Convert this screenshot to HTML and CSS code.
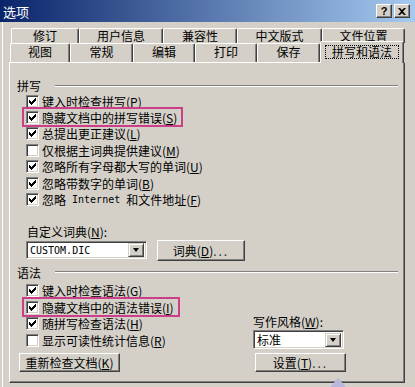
FILE: index.html
```html
<!DOCTYPE html>
<html lang="zh-CN">
<head>
  <meta charset="utf-8">
  <title>选项</title>
  <link rel="stylesheet" href="styles.css">
</head>
<body>

<div class="dialog">
  <div class="titlebar">
    <span class="title">选项</span>
    <div class="caption-btns">
      <span class="cap-btn">?</span>
      <span class="cap-btn">
        <svg width="8" height="7" viewBox="0 0 8 7"><path d="M0 0h2l2 2 2-2h2L5 3.5 8 7H6L4 5 2 7H0l3-3.5z" fill="#000"/></svg>
      </span>
    </div>
  </div>

  <div class="tabbox">
    <div class="tab-row back">
      <div class="tab">修订</div>
      <div class="tab">用户信息</div>
      <div class="tab">兼容性</div>
      <div class="tab">中文版式</div>
      <div class="tab">文件位置</div>
    </div>
    <div class="tab-row front">
      <div class="tab">视图</div>
      <div class="tab">常规</div>
      <div class="tab">编辑</div>
      <div class="tab">打印</div>
      <div class="tab">保存</div>
      <div class="tab selected"><span class="focus">拼写和语法</span></div>
    </div>

    <div class="panel">
      <!-- Spelling -->
      <div class="group-head"><span>拼写</span><i class="etch"></i></div>
      <div class="check"><span class="box on"></span>键入时检查拼写(<u>P</u>)</div>
      <div class="check marked"><span class="box on"></span>隐藏文档中的拼写错误(<u>S</u>)</div>
      <div class="check"><span class="box on"></span>总提出更正建议(<u>L</u>)</div>
      <div class="check"><span class="box"></span>仅根据主词典提供建议(<u>M</u>)</div>
      <div class="check"><span class="box on"></span>忽略所有字母都大写的单词(<u>U</u>)</div>
      <div class="check"><span class="box on"></span>忽略带数字的单词(<u>B</u>)</div>
      <div class="check"><span class="box on"></span>忽略<span class="mono"> Internet </span>和文件地址(<u>F</u>)</div>

      <div class="field-label">自定义词典(<u>N</u>):</div>
      <div class="dict-row">
        <div class="combo dict">
          <span class="combo-text mono">CUSTOM.DIC</span>
          <span class="drop"></span>
        </div>
        <div class="btn dict-btn">词典(<u>D</u>)<span class="dots">...</span></div>
      </div>

      <!-- Grammar -->
      <div class="group-head grammar-head"><span>语法</span><i class="etch"></i></div>
      <div class="grammar">
        <div class="grammar-left">
          <div class="check"><span class="box on"></span>键入时检查语法(<u>G</u>)</div>
          <div class="check marked"><span class="box on"></span>隐藏文档中的语法错误(<u>I</u>)</div>
          <div class="check"><span class="box on"></span>随拼写检查语法(<u>H</u>)</div>
          <div class="check"><span class="box"></span>显示可读性统计信息(<u>R</u>)</div>
          <div class="btn recheck">重新检查文档(<u>K</u>)</div>
        </div>
        <div class="grammar-right">
          <div class="field-label style-label">写作风格(<u>W</u>):</div>
          <div class="combo style">
            <span class="combo-text">标准</span>
            <span class="drop"></span>
          </div>
          <div class="btn settings">设置(<u>T</u>)<span class="dots">...</span></div>
        </div>
      </div>
    </div>
  </div>

  <span class="watermark"></span>
</div>

</body>
</html>
```

FILE: styles.css
```css
body {
  margin: 0;
  background: #d4d0c8;
  font-family: "Noto Sans CJK SC", sans-serif;
  font-size: 12px;
  color: #000;
  overflow: hidden;
}

u {
  text-underline-offset: 1px;
}

.mono {
  font-family: "DejaVu Sans Mono", monospace;
  font-size: 10px;
  white-space: pre;
}

.dialog {
  width: 415px;
  height: 387px;
  position: relative;
}

/* Title bar */
.titlebar {
  height: 22px;
  box-sizing: border-box;
  padding: 0 5px 0 3px;
  display: flex;
  align-items: center;
  justify-content: space-between;
  background: linear-gradient(to right, #0a246a, #a6caf0);
  color: #fff;
}

.title {
  font-size: 13px;
  line-height: 1;
}

.caption-btns {
  display: flex;
  gap: 2px;
}

.cap-btn {
  width: 16px;
  height: 14px;
  box-sizing: border-box;
  display: flex;
  align-items: center;
  justify-content: center;
  background: #d4d0c8;
  border: 1px solid;
  border-color: #fff #404040 #404040 #fff;
  box-shadow: inset -1px -1px #808080;
  color: #000;
  font: bold 11px "Liberation Sans", sans-serif;
}

/* Tabs */
.tabbox {
  height: 365px;
  padding: 6px 10px 0 9px;
  box-shadow: inset 2px 0 #d4d0c8, inset 3px 0 #fff;
}

.tab-row {
  display: flex;
}

.tab-row.back {
  height: 15px;
  padding-left: 2px;
}

.tab-row.front {
  height: 19px;
  padding-left: 1px;
  align-items: flex-end;
}

.tab {
  height: 100%;
  box-sizing: border-box;
  border-top: 1px solid #fff;
  border-left: 1px solid #fff;
  border-right: 1px solid #404040;
  border-radius: 2px 2px 0 0;
  box-shadow: inset -1px 0 #808080;
  text-align: center;
  line-height: 13px;
  background: #d4d0c8;
}

.back .tab:nth-child(1) { width: 68px; }
.back .tab:nth-child(2) { width: 84px; }
.back .tab:nth-child(3) { width: 74px; }
.back .tab:nth-child(4) { width: 85px; }
.back .tab:nth-child(5) { width: 83px; }

.front .tab { line-height: 16px; }
.front .tab:nth-child(1) { width: 60px; }
.front .tab:nth-child(2) { width: 63px; }
.front .tab:nth-child(3) { width: 62px; }
.front .tab:nth-child(4) { width: 62px; }
.front .tab:nth-child(5) { width: 63px; }

.tab.selected {
  width: 84px;
  height: 22px;
  margin-bottom: -1px;
  position: relative;
  z-index: 1;
  line-height: 12px;
}

.focus {
  display: inline-block;
  margin-top: 3px;
  padding: 0 6px;
  border: 1px dotted #000;
}

/* Page panel */
.panel {
  height: 321px;
  box-sizing: border-box;
  padding: 15px 6px 0 0;
  border: 1px solid;
  border-color: #fff #404040 #404040 #fff;
  box-shadow: inset -1px -1px #808080;
}

.group-head {
  height: 15px;
  padding-left: 7px;
  display: flex;
  align-items: center;
}

.etch {
  flex: 1;
  margin-left: 14px;
  border-top: 1px solid #808080;
  border-bottom: 1px solid #fff;
}

.grammar-head {
  margin-top: 4px;
}

.check {
  width: fit-content;
  height: 16.4px;
  margin-left: 16px;
  display: flex;
  align-items: center;
  white-space: nowrap;
}

.check.marked {
  position: relative;
}

.check.marked::after {
  content: "";
  position: absolute;
  left: -4px;
  right: -6px;
  top: -2px;
  bottom: -1px;
  border: 2px solid #cc3f88;
}

.box {
  width: 13px;
  height: 13px;
  box-sizing: border-box;
  margin-right: 3px;
  flex: none;
  border: 1px solid;
  border-color: #808080 #fff #fff #808080;
  box-shadow: inset 1px 1px #404040, inset -1px -1px #d4d0c8;
  background: #fff;
}

.box.on {
  background: #fff url("data:image/svg+xml,%3Csvg xmlns='http://www.w3.org/2000/svg' width='7' height='7' shape-rendering='crispEdges'%3E%3Cpath d='M0 2h1v3H0zM1 3h1v3H1zM2 4h1v3H2zM3 3h1v3H3zM4 2h1v3H4zM5 1h1v3H5zM6 0h1v3H6z'/%3E%3C/svg%3E") no-repeat 2px 2px;
}

.field-label {
  margin: 16px 0 0 17px;
  height: 16px;
  line-height: 16px;
}

.dict-row {
  height: 21px;
  display: flex;
  align-items: center;
}

.combo {
  height: 18px;
  box-sizing: border-box;
  display: flex;
  align-items: center;
  border: 1px solid;
  border-color: #808080 #fff #fff #808080;
  box-shadow: inset 1px 1px #404040, inset -1px -1px #d4d0c8;
  background: #fff;
  padding: 0 2px 0 3px;
}

.combo.dict {
  width: 121px;
  margin-left: 16px;
}

.combo-text {
  flex: 1;
}

.drop {
  width: 16px;
  height: 14px;
  box-sizing: border-box;
  display: flex;
  align-items: center;
  justify-content: center;
  background: #d4d0c8;
  border: 1px solid;
  border-color: #d4d0c8 #404040 #404040 #d4d0c8;
  box-shadow: inset 1px 1px #fff, inset -1px -1px #808080;
}

.drop::before {
  content: "";
  border-left: 3.5px solid transparent;
  border-right: 3.5px solid transparent;
  border-top: 4px solid #000;
}

.btn {
  box-sizing: border-box;
  display: flex;
  align-items: center;
  justify-content: center;
  background: #d4d0c8;
  border: 1px solid;
  border-color: #fff #404040 #404040 #fff;
  box-shadow: inset -1px -1px #808080;
  white-space: nowrap;
}

.dots {
  letter-spacing: 2px;
  color: #333;
}

.dict-btn {
  width: 88px;
  height: 21px;
  margin-left: 10px;
}

.grammar {
  margin-top: 3px;
  display: flex;
  align-items: flex-end;
}

.grammar-left {
  width: 243px;
}

.recheck {
  width: 101px;
  height: 19px;
  margin: 5px 0 0 9px;
}

.style-label {
  margin: 0;
}

.combo.style {
  width: 91px;
  height: 19px;
}

.settings {
  width: 91px;
  height: 19px;
  margin: 4px 0 0 2px;
}

/* Faint watermark peeking in at the bottom edge */
.watermark {
  position: absolute;
  left: 330px;
  bottom: 0;
  border-left: 8px solid transparent;
  border-right: 8px solid transparent;
  border-bottom: 9px solid #b9b8dc;
}
```
